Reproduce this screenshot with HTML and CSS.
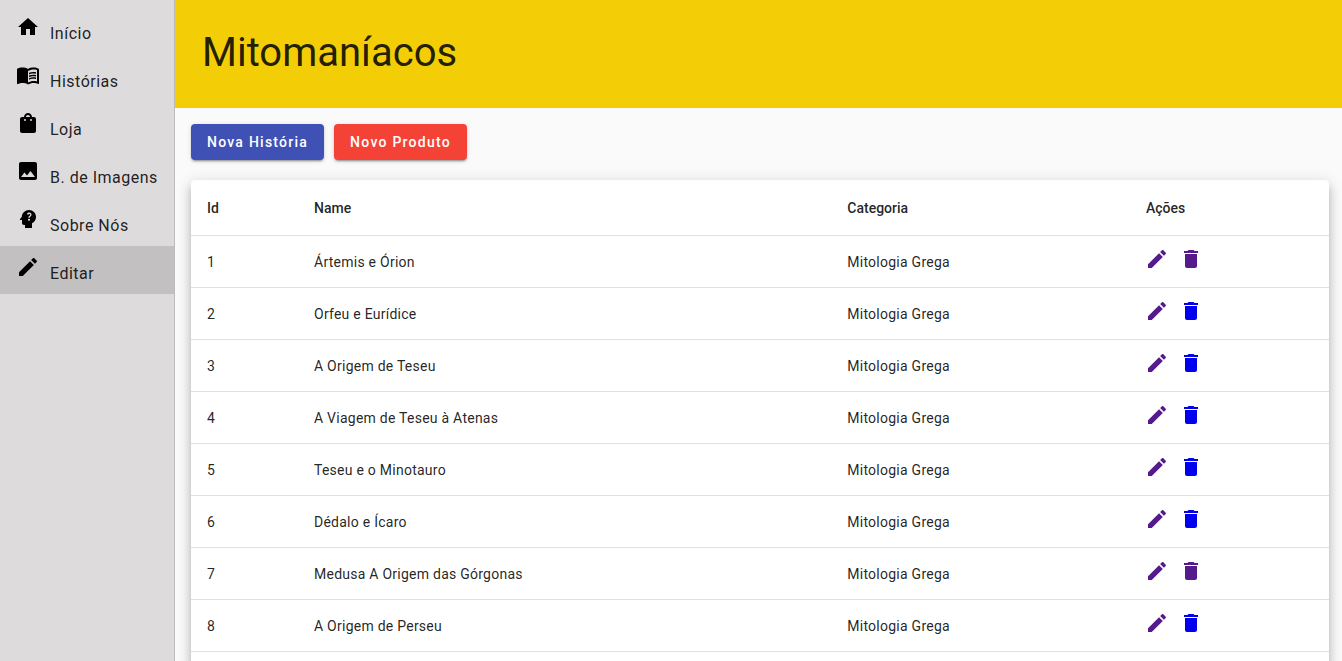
FILE: index.html
```html
<!DOCTYPE html>
<html lang="pt">
<head>
    <meta charset="UTF-8">
    <meta name="viewport" content="width=device-width, initial-scale=1.0">
    <title>Mitomaníacos</title>
    <link rel="stylesheet" href="styles.css">
</head>
<body>
    <svg class="icon-defs">
        <symbol id="icon-edit" viewBox="0 0 24 24"><path d="M3 17.25V21h3.75L17.81 9.94l-3.75-3.75L3 17.25zM20.71 7.04c.39-.39.39-1.02 0-1.41l-2.34-2.34c-.39-.39-1.02-.39-1.41 0l-1.83 1.83 3.75 3.75 1.83-1.83z"/></symbol>
        <symbol id="icon-delete" viewBox="0 0 24 24"><path d="M6 19c0 1.1.9 2 2 2h8c1.1 0 2-.9 2-2V7H6v12zM19 4h-3.5l-1-1h-5l-1 1H5v2h14V4z"/></symbol>
    </svg>

    <div class="layout">
        <nav class="sidebar">
            <a class="nav-item" href="#">
                <svg class="nav-icon" viewBox="0 0 24 24"><path d="M10 20v-6h4v6h5v-8h3L12 3 2 12h3v8z"/></svg>
                <span>Início</span>
            </a>
            <a class="nav-item" href="#">
                <svg class="nav-icon" viewBox="0 0 24 24"><path d="M21 5c-1.11-.35-2.33-.5-3.5-.5-1.95 0-4.05.4-5.5 1.5-1.45-1.1-3.55-1.5-5.5-1.5S2.45 4.9 1 6v14.65c0 .25.25.5.5.5.1 0 .15-.05.25-.05C3.1 20.45 5.05 20 6.5 20c1.95 0 4.05.4 5.5 1.5 1.35-.85 3.8-1.5 5.5-1.5 1.65 0 3.35.3 4.75 1.05.1.05.15.05.25.05.25 0 .5-.25.5-.5V6c-.6-.45-1.25-.75-2-1zm0 13.5c-1.1-.35-2.3-.5-3.5-.5-1.7 0-4.15.65-5.5 1.5V8c1.35-.85 3.8-1.5 5.5-1.5 1.2 0 2.4.15 3.5.5v11.5z"/><path d="M17.5 10.5c.88 0 1.73.09 2.5.26V9.24c-.79-.15-1.64-.24-2.5-.24-1.7 0-3.24.29-4.5.83v1.66c1.13-.64 2.7-.99 4.5-.99zM13 12.49v1.66c1.13-.64 2.7-.99 4.5-.99.88 0 1.73.09 2.5.26V11.9c-.79-.15-1.64-.24-2.5-.24-1.7 0-3.24.3-4.5.83zM17.5 14.33c-1.7 0-3.24.29-4.5.83v1.66c1.13-.64 2.7-.99 4.5-.99.88 0 1.73.09 2.5.26v-1.52c-.79-.16-1.64-.24-2.5-.24z"/></svg>
                <span>Histórias</span>
            </a>
            <a class="nav-item" href="#">
                <svg class="nav-icon" viewBox="0 0 24 24"><path fill-rule="evenodd" d="M18 6h-2c0-2.21-1.79-4-4-4S8 3.79 8 6H6c-1.1 0-2 .9-2 2v12c0 1.1.9 2 2 2h12c1.1 0 2-.9 2-2V8c0-1.1-.9-2-2-2zm-6-2c1.1 0 2 .9 2 2h-4c0-1.1.9-2 2-2zM9 10a1 1 0 1 1 0-2 1 1 0 0 1 0 2zm6 0a1 1 0 1 1 0-2 1 1 0 0 1 0 2z"/></svg>
                <span>Loja</span>
            </a>
            <a class="nav-item" href="#">
                <svg class="nav-icon" viewBox="0 0 24 24"><path d="M21 19V5c0-1.1-.9-2-2-2H5c-1.1 0-2 .9-2 2v14c0 1.1.9 2 2 2h14c1.1 0 2-.9 2-2zM8.5 13.5l2.5 3.01L14.5 12l4.500 6H5l3.5-4.5z"/></svg>
                <span>B. de Imagens</span>
            </a>
            <a class="nav-item" href="#">
                <svg class="nav-icon" viewBox="0 0 24 24"><path fill-rule="evenodd" d="M13 3C9.100 3 6 6 5.800 9.700L3.900 12.300c-.25.33 0 .7.4.7H6v3c0 1.100.9 2 2 2h1v3h7v-4.700c2.400-1.100 4-3.500 4-6.300 0-3.900-3.100-7-7-7zm-.9 10.200a1 1 0 1 1 1.800 0 1 1 0 0 1-1.800 0zm1.600-2.500h-1.400c0-1.800 1.900-1.800 1.900-2.900 0-.5-.4-.9-1-.9-.5 0-.9.3-1 .9l-1.300-.5C11.200 6.300 12 5.600 13.200 5.600c1.400 0 2.300.9 2.300 2.100 0 1.700-1.800 1.800-1.800 3z"/></svg>
                <span>Sobre Nós</span>
            </a>
            <a class="nav-item nav-item-active" href="#">
                <svg class="nav-icon" viewBox="0 0 24 24"><path d="M3 17.25V21h3.75L17.81 9.94l-3.75-3.75L3 17.25zM20.71 7.04c.39-.39.39-1.02 0-1.41l-2.34-2.34c-.39-.39-1.02-.39-1.41 0l-1.83 1.83 3.75 3.75 1.83-1.83z"/></svg>
                <span>Editar</span>
            </a>
        </nav>

        <div class="main">
            <header class="banner">
                <h1>Mitomaníacos</h1>
            </header>

            <div class="content">
                <div class="actions">
                    <button class="btn btn-indigo" type="button">Nova História</button>
                    <button class="btn btn-red" type="button">Novo Produto</button>
                </div>

                <div class="card">
                    <table class="table">
                        <thead>
                            <tr>
                                <th class="col-id">Id</th>
                                <th class="col-name">Name</th>
                                <th class="col-cat">Categoria</th>
                                <th>Ações</th>
                            </tr>
                        </thead>
                        <tbody>
                            <tr>
                                <td>1</td>
                                <td>Ártemis e Órion</td>
                                <td>Mitologia Grega</td>
                                <td><div class="row-actions"><svg class="icon-visited"><use href="#icon-edit"/></svg><svg class="icon-visited"><use href="#icon-delete"/></svg></div></td>
                            </tr>
                            <tr>
                                <td>2</td>
                                <td>Orfeu e Eurídice</td>
                                <td>Mitologia Grega</td>
                                <td><div class="row-actions"><svg class="icon-visited"><use href="#icon-edit"/></svg><svg class="icon-link"><use href="#icon-delete"/></svg></div></td>
                            </tr>
                            <tr>
                                <td>3</td>
                                <td>A Origem de Teseu</td>
                                <td>Mitologia Grega</td>
                                <td><div class="row-actions"><svg class="icon-visited"><use href="#icon-edit"/></svg><svg class="icon-link"><use href="#icon-delete"/></svg></div></td>
                            </tr>
                            <tr>
                                <td>4</td>
                                <td>A Viagem de Teseu à Atenas</td>
                                <td>Mitologia Grega</td>
                                <td><div class="row-actions"><svg class="icon-visited"><use href="#icon-edit"/></svg><svg class="icon-link"><use href="#icon-delete"/></svg></div></td>
                            </tr>
                            <tr>
                                <td>5</td>
                                <td>Teseu e o Minotauro</td>
                                <td>Mitologia Grega</td>
                                <td><div class="row-actions"><svg class="icon-visited"><use href="#icon-edit"/></svg><svg class="icon-link"><use href="#icon-delete"/></svg></div></td>
                            </tr>
                            <tr>
                                <td>6</td>
                                <td>Dédalo e Ícaro</td>
                                <td>Mitologia Grega</td>
                                <td><div class="row-actions"><svg class="icon-visited"><use href="#icon-edit"/></svg><svg class="icon-link"><use href="#icon-delete"/></svg></div></td>
                            </tr>
                            <tr>
                                <td>7</td>
                                <td>Medusa A Origem das Górgonas</td>
                                <td>Mitologia Grega</td>
                                <td><div class="row-actions"><svg class="icon-visited"><use href="#icon-edit"/></svg><svg class="icon-visited"><use href="#icon-delete"/></svg></div></td>
                            </tr>
                            <tr>
                                <td>8</td>
                                <td>A Origem de Perseu</td>
                                <td>Mitologia Grega</td>
                                <td><div class="row-actions"><svg class="icon-visited"><use href="#icon-edit"/></svg><svg class="icon-link"><use href="#icon-delete"/></svg></div></td>
                            </tr>
                        </tbody>
                    </table>
                </div>
            </div>
        </div>
    </div>
</body>
</html>
```

FILE: styles.css
```css
* {
    box-sizing: border-box;
}

html,
body {
    height: 100%;
    overflow: hidden;
}

body {
    margin: 0;
    font-family: Roboto, "Liberation Sans", sans-serif;
    color: rgba(0, 0, 0, 0.87);
    background-color: #fafafa;
}

.icon-defs {
    display: none;
}

.layout {
    display: flex;
    height: 100%;
}

.sidebar {
    width: 175px;
    flex-shrink: 0;
    padding-top: 6px;
    background-color: #dddbdc;
    border-right: 1px solid #bdbbbc;
}

.nav-item {
    display: flex;
    height: 48px;
    padding: 0 16px;
    color: rgba(0, 0, 0, 0.87);
    text-decoration: none;
    font-size: 16px;
    letter-spacing: 0.5px;
}

.nav-item span {
    margin-top: 18px;
    margin-left: 10px;
    line-height: 19px;
}

.nav-icon {
    width: 24px;
    height: 24px;
    margin-top: 9px;
    flex-shrink: 0;
    fill: #000;
}

.nav-item-active {
    background-color: #c2c0c1;
}

.main {
    flex: 1;
    min-width: 0;
    height: 100%;
    overflow: hidden;
}

.banner {
    height: 108px;
    padding: 0 27px 2px;
    display: flex;
    align-items: center;
    background-color: #f3cd05;
}

.banner h1 {
    margin: 0;
    font-size: 40px;
    font-weight: 400;
    line-height: 48px;
    color: rgba(0, 0, 0, 0.87);
}

.content {
    padding: 16px 13px 0 16px;
}

.actions {
    display: flex;
    gap: 10px;
    margin-bottom: 20px;
}

.btn {
    height: 36px;
    padding: 0 16px;
    border: none;
    border-radius: 4px;
    color: #fff;
    font-family: inherit;
    font-size: 14px;
    font-weight: 500;
    letter-spacing: 1.25px;
    box-shadow: 0 3px 1px -2px rgba(0, 0, 0, 0.2), 0 2px 2px 0 rgba(0, 0, 0, 0.14), 0 1px 5px 0 rgba(0, 0, 0, 0.12);
}

.btn-indigo {
    background-color: #3f51b5;
}

.btn-red {
    background-color: #f44336;
}

.card {
    padding-bottom: 40px;
    background-color: #fff;
    border-radius: 4px;
    box-shadow: 0 5px 5px -3px rgba(0, 0, 0, 0.2), 0 8px 10px 1px rgba(0, 0, 0, 0.14), 0 3px 14px 2px rgba(0, 0, 0, 0.12);
}

.table {
    width: 100%;
    border-collapse: collapse;
    table-layout: fixed;
    font-size: 14px;
}

.table th,
.table td {
    padding: 0 16px;
    text-align: left;
    border-bottom: 1px solid #e0e0e0;
}

.table th {
    height: 55px;
    padding-top: 1px;
    font-weight: 500;
}

.table td {
    height: 52px;
    padding-top: 2px;
    letter-spacing: 0.25px;
}

.col-id {
    width: 107px;
}

.col-name {
    width: 533.3px;
}

.col-cat {
    width: 298.7px;
}

.row-actions {
    display: flex;
    gap: 10px;
    margin-left: -1px;
    margin-top: -6px;
}

.row-actions svg {
    width: 24px;
    height: 24px;
    display: block;
}

.icon-visited {
    fill: #551a8b;
}

.icon-link {
    fill: #0000ee;
}
```
